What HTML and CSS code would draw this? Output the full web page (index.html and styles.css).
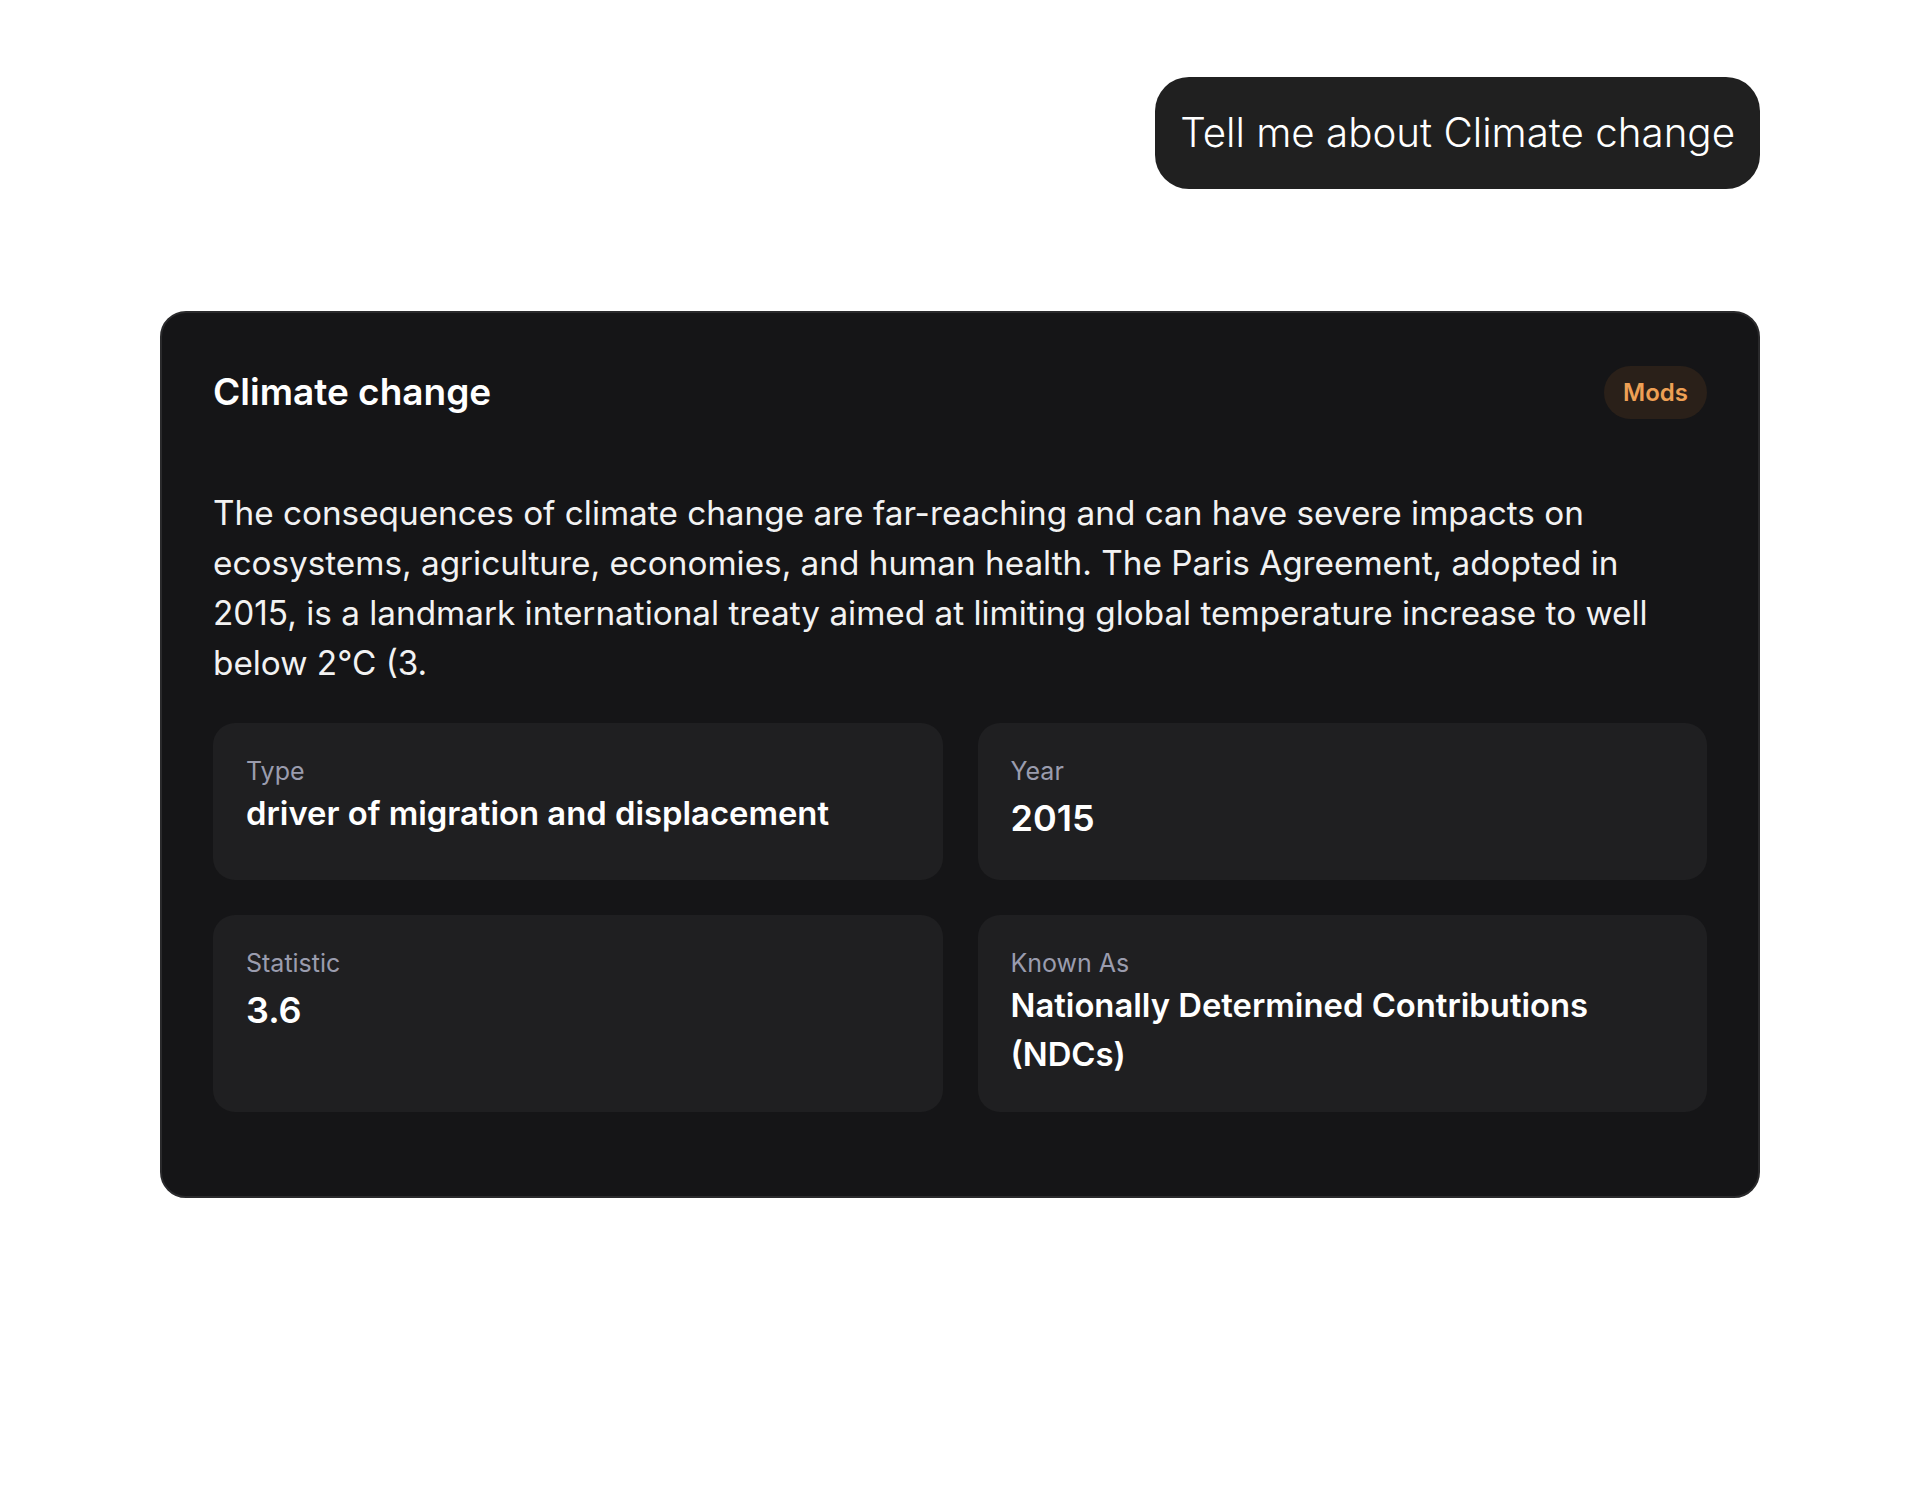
FILE: index.html
```html
<!DOCTYPE html>
<html lang="en">
<head>
<meta charset="utf-8">
<title>Climate change</title>
<link rel="stylesheet" href="styles.css">
</head>
<body>
<main class="chat">
  <div class="user-row">
    <div class="bubble">Tell me about Climate change</div>
  </div>
  <section class="card">
    <header class="card-head">
      <h2 class="card-title">Climate change</h2>
      <span class="badge">Mods</span>
    </header>
    <p class="card-text">The consequences of climate change are far-reaching and can have severe impacts on ecosystems, agriculture, economies, and human health. The Paris Agreement, adopted in 2015, is a landmark international treaty aimed at limiting global temperature increase to well below 2°C (3.</p>
    <div class="facts">
      <div class="fact">
        <div class="fact-label">Type</div>
        <div class="fact-value">driver of migration and displacement</div>
      </div>
      <div class="fact">
        <div class="fact-label">Year</div>
        <div class="fact-value num">2015</div>
      </div>
      <div class="fact">
        <div class="fact-label">Statistic</div>
        <div class="fact-value num">3.6</div>
      </div>
      <div class="fact">
        <div class="fact-label">Known As</div>
        <div class="fact-value">Nationally Determined Contributions (NDCs)</div>
      </div>
    </div>
  </section>
</main>
</body>
</html>
```

FILE: styles.css
```css
* { box-sizing: border-box; }
html, body { margin: 0; padding: 0; background: #ffffff; }
body {
  font-family: Inter, "Noto Sans", "Liberation Sans", sans-serif;
  color: #f2f2f2;
}
.chat {
  width: 1600px;
  margin: 0 auto;
  padding-top: 77px;
  display: flex;
  flex-direction: column;
}
.user-row {
  display: flex;
  justify-content: flex-end;
}
.bubble {
  background: #202020;
  color: #ffffff;
  font-size: 40.3px;
  font-weight: 300;
  line-height: 60px;
  padding: 26px 25px;
  border-radius: 34px;
}
.card {
  margin-top: 122px;
  background: #151517;
  border: 2px solid #2a2a2c;
  border-radius: 26px;
  padding: 51px 51px 84px;
}
.card-head {
  display: flex;
  align-items: center;
  justify-content: space-between;
  height: 56px;
}
.card-title {
  margin: 0;
  font-size: 37px;
  font-weight: 600;
  line-height: 56px;
  color: #ffffff;
}
.badge {
  background: #2a2019;
  color: #eea055;
  font-size: 24px;
  font-weight: 600;
  line-height: 53px;
  padding: 0 19px;
  border-radius: 27px;
}
.card-text {
  margin: 68px 0 0;
  font-size: 33.3px;
  line-height: 50px;
  color: #f2f2f2;
}
.facts {
  margin-top: 35px;
  display: grid;
  grid-template-columns: 1fr 1fr;
  gap: 35px;
}
.fact {
  background: #1f1f21;
  border-radius: 22px;
  padding: 30px 33px 33px;
}
.fact-label {
  font-size: 25px;
  line-height: 36px;
  color: #9a9cae;
}
.fact-value {
  font-size: 32.8px;
  font-weight: 600;
  line-height: 49px;
  color: #ffffff;
}
.fact-value.num {
  font-size: 36px;
  line-height: 58px;
}
```
